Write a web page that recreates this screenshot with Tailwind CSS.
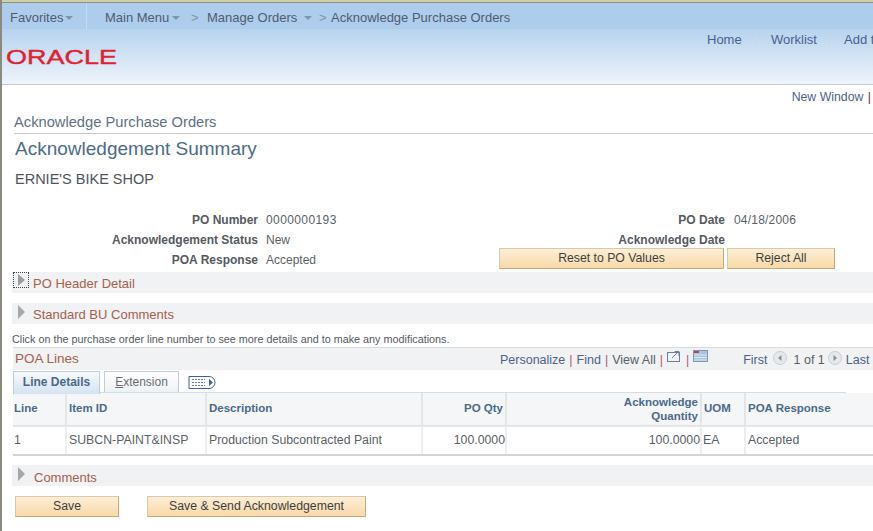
<!DOCTYPE html>
<html lang="en">
<head>
  <meta charset="UTF-8">
  <title>Acknowledge Purchase Orders</title>
  <script src="https://cdn.jsdelivr.net/npm/@tailwindcss/browser@4"></script>
</head>
<body class="bg-white">
  <div class="w-[873px] h-[531px] overflow-hidden font-['Liberation_Sans',Arial,sans-serif] text-[12px] text-[#5a5f66] border-l-2 border-[#8a8a80] relative">
    <!-- top edge -->
    <div class="h-[3px] -ml-[2px] bg-[#cfcfa8] border-b border-[#8f8f80]"></div>

    <!-- nav -->
    <div class="h-[26px] bg-[#aecdec] flex items-center text-[13px] text-[#4e5c70] whitespace-nowrap">
      <div class="w-[85px] h-full flex items-center pt-[4px] pl-[8px] gap-[2px] border-r border-[#c6daef]">
        <span>Favorites</span>
        <svg width="8" height="4" viewBox="0 0 8 4"><path d="M0 0h8L4 4z" fill="#7d95ad"/></svg>
      </div>
      <div class="flex items-center pt-[4px]">
        <span class="ml-[18px] w-[65px]">Main Menu</span>
        <svg class="ml-[2px]" width="8" height="4" viewBox="0 0 8 4"><path d="M0 0h8L4 4z" fill="#7d95ad"/></svg>
        <span class="ml-[11px] w-[11px] text-[#7f93a8]">&gt;</span>
        <span class="ml-[5px] w-[90px]">Manage Orders</span>
        <svg class="ml-[7px]" width="8" height="4" viewBox="0 0 8 4"><path d="M0 0h8L4 4z" fill="#7d95ad"/></svg>
        <span class="ml-[7px] w-[12px] text-[#7f93a8]">&gt;</span>
        <span>Acknowledge Purchase Orders</span>
      </div>
    </div>

    <!-- header -->
    <div class="h-[56px] bg-gradient-to-b from-[#b7d3ee] to-[#eef4fb] border-b border-[#c4c9ce] flex justify-between">
      <div class="pl-[4px] pt-[14px]">
        <svg width="114" height="28" viewBox="0 0 114 28">
          <text x="0" y="21" textLength="111" lengthAdjust="spacingAndGlyphs" font-family="Liberation Sans" font-size="20" stroke="#e0222e" stroke-width="0.4" fill="#e0222e">ORACLE</text>
        </svg>
      </div>
      <div class="flex h-[20px] mt-[1px] text-[13px] text-[#4a5f92] items-center whitespace-nowrap w-[166px] shrink-0">
        <span class="w-[50px] shrink-0 border-r border-[#c8d8e8] h-[14px] leading-[14px]">Home</span>
        <span class="ml-[14px] w-[59px] shrink-0 border-r border-[#c8d8e8] h-[14px] leading-[14px]">Worklist</span>
        <span class="ml-[14px] shrink-0">Add to</span>
      </div>
    </div>

    <!-- new window -->
    <div class="h-[21px] pt-[3px] flex justify-end items-center text-[12.300px] text-[#4f5f8a]">
      <span class="whitespace-nowrap">New Window <span class="text-[#7a1f4a] ml-[1px]">|</span></span>
      <span class="w-[2px]"></span>
    </div>

    <!-- page title -->
    <div class="mt-[3px] ml-[12px] h-[25px] border-b border-[#c9c9c9] text-[14.700px] leading-[26px] text-[#5d7186]">Acknowledge Purchase Orders</div>
    <div class="ml-[13px] h-[30px] text-[19px] leading-[30px] text-[#4c6b8c]">Acknowledgement Summary</div>
    <div class="ml-[13px] mt-[5px] h-[20px] text-[14.500px] leading-[20px] text-[#50555c]">ERNIE'S BIKE SHOP</div>

    <!-- summary fields -->
    <div class="mt-[21px] h-[62px] flex relative">
      <div class="w-[256px] flex flex-col text-right font-bold text-[#555a60] leading-[20px]">
        <span>PO Number</span>
        <span>Acknowledgement Status</span>
        <span>POA Response</span>
      </div>
      <div class="w-[467px] ml-[8px] flex flex-col leading-[20px]">
        <span class="tracking-[0.4px]">0000000193</span>
        <span>New</span>
        <span>Accepted</span>
      </div>
      <div class="flex flex-col leading-[20px] font-bold text-right text-[#555a60] absolute right-[148px] top-0 items-end">
        <span>PO Date</span>
        <span>Acknowledge Date</span>
      </div>
      <span class="absolute left-[732px] top-0 leading-[20px] tracking-[0.2px]">04/18/2006</span>
      <div class="absolute left-[497px] top-[38px] flex gap-[3px] text-[12.250px] text-[#3f3f3f]">
        <button class="w-[225px] h-[21px] bg-gradient-to-b from-[#fdeed7] to-[#f8d9a8] border border-[#d8c9ab] border-r-[#c9a878] border-b-[#c9a878]">Reset to PO Values</button>
        <button class="w-[108px] h-[21px] bg-gradient-to-b from-[#fdeed7] to-[#f8d9a8] border border-[#d8c9ab] border-r-[#c9a878] border-b-[#c9a878]">Reject All</button>
      </div>
    </div>

    <!-- collapsible sections -->
    <div class="ml-[10px] h-[21px] bg-[#f0f2f3] flex items-center text-[13px] text-[#a8604d]">
      <span class="w-[16px] h-[16px] ml-[1px] -mt-[5px] border border-dotted border-[#444] flex items-center justify-center">
        <svg width="9" height="12" viewBox="0 0 9 12"><path d="M1 0l7 6-7 6z" fill="#9a9c9e"/></svg>
      </span>
      <span class="ml-[4px] mt-[2px]">PO Header Detail</span>
    </div>
    <div class="mt-[10px] ml-[10px] h-[21px] bg-[#f0f2f3] flex items-center text-[13px] text-[#a8604d]">
      <svg class="ml-[5px] -mt-[4px]" width="9" height="14" viewBox="0 0 9 14"><path d="M1 0l7 7-7 7z" fill="#a5a7a9"/></svg>
      <span class="ml-[7px] mt-[3px]">Standard BU Comments</span>
    </div>

    <div class="ml-[10px] mt-[8px] h-[15px] text-[10.800px] leading-[14px] whitespace-nowrap text-[#55595e]">Click on the purchase order line number to see more details and to make any modifications.</div>

    <!-- POA lines -->
    <div class="ml-[11px] h-[23px] bg-[#f0f2f3] border-t border-[#d9dcde] flex items-center relative text-[12.500px] text-[#4f5f8a]">
      <span class="ml-[2px] text-[13.500px] text-[#a8604d]">POA Lines</span>
      <div class="absolute left-[487px] top-[3px] flex items-center whitespace-nowrap h-[18px]">
        <span>Personalize</span><span class="mx-[4px] text-[#b5566e]">|</span>
        <span>Find</span><span class="mx-[4px] text-[#b5566e]">|</span>
        <span class="text-[#5a5f66]">View All</span><span class="mx-[4px] text-[#b5566e]">|</span>
        <svg class="-mt-[8px]" width="15" height="12" viewBox="0 0 15 12" fill="none"><rect x="0.500" y="2.500" width="12" height="9" stroke="#6d7f9c"/><path d="M5 8l6-6M7.500 1.500h4.500V6" stroke="#6d7f9c"/></svg>
        <span class="mx-[4px] text-[#b5566e]">|</span>
        <svg class="-mt-[8px]" width="15" height="12" viewBox="0 0 15 12"><rect x="0.500" y="0.500" width="14" height="11" fill="#a9c5df" stroke="#7f97b3"/><rect x="1" y="1" width="5" height="2" fill="#b3475f"/><path d="M1 5h13M1 7.500h13M1 10h13" stroke="#dce8f2"/></svg>
        <span class="ml-[35px]">First</span>
        <svg class="ml-[5px] -mt-[4px]" width="14" height="14" viewBox="0 0 14 14"><circle cx="7" cy="7" r="6.500" fill="#e6e9ec" stroke="#c9cdd1"/><path d="M8.500 4v6L5 7z" fill="#8a8f95"/></svg>
        <span class="ml-[7px] text-[#5a5f66]">1 of 1</span>
        <svg class="ml-[3px] -mt-[4px]" width="14" height="14" viewBox="0 0 14 14"><circle cx="7" cy="7" r="6.500" fill="#e6e9ec" stroke="#c9cdd1"/><path d="M5.500 4v6L9 7z" fill="#8a8f95"/></svg>
        <span class="ml-[4px]">Last</span>
      </div>
    </div>

    <!-- tabs -->
    <div class="mt-[1px] ml-[11px] h-[21px] flex items-end w-[833px] border-b-2 border-[#d3dde6] box-content -mb-[1px]">
      <div class="w-[87px] h-[23px] pb-[2px] -mb-[2px] bg-gradient-to-b from-[#f7fafd] to-[#d5e3f1] border border-b-0 border-[#c2ccd6] flex items-center justify-center font-bold text-[#4a6a8c]">Line Details</div>
      <div class="ml-[4px] w-[75px] h-[21px] bg-gradient-to-b from-[#ffffff] to-[#eef1f4] border border-b-0 border-[#c2ccd6] flex items-center justify-center text-[#6b6f75]"><span><span class="underline">E</span>xtension</span></div>
      <svg class="ml-[9px] mb-[2px]" width="28" height="15" viewBox="0 0 28 15"><path d="M1 1.500h20a6 6 0 0 1 0 12h-20z" fill="#fff" stroke="#3f5f9f"/><path d="M4 4.500h13M4 7.500h13M4 10.500h13" stroke="#5f7fb5" stroke-dasharray="2 1"/><path d="M21 4v7l4-3.500z" fill="#3f5f9f"/></svg>
    </div>

    <!-- table -->
    <div class="ml-[11px] w-[860px] text-[11.500px]">
      <div class="grid grid-cols-[54px_140px_216px_84px_195px_44px_127px] h-[34px] font-bold text-[#4a6a8c] bg-[#f5f6f7] border-b-2 border-[#e3e5e7]">
        <div class="px-[1px] flex items-center border-r-2 border-[#e3e5e7]">Line</div>
        <div class="px-[2px] flex items-center border-r-2 border-[#e3e5e7]">Item ID</div>
        <div class="px-[2px] flex items-center border-r-2 border-[#e3e5e7]">Description</div>
        <div class="px-[2px] flex items-center justify-end border-r-2 border-[#e3e5e7]">PO Qty</div>
        <div class="px-[2px] flex items-center justify-end text-right leading-[14px] border-r-2 border-[#e3e5e7]">Acknowledge<br>Quantity</div>
        <div class="px-[2px] flex items-center border-r-2 border-[#e3e5e7]">UOM</div>
        <div class="px-[2px] flex items-center">POA Response</div>
      </div>
      <div class="grid grid-cols-[54px_140px_216px_84px_195px_44px_127px] h-[29px] text-[12.300px] border-b-2 border-[#d3d6d9]">
        <div class="px-[1px] flex items-center border-r-2 border-[#eceef0]">1</div>
        <div class="px-[2px] flex items-center border-r-2 border-[#eceef0]">SUBCN-PAINT&amp;INSP</div>
        <div class="px-[2px] flex items-center border-r-2 border-[#eceef0]">Production Subcontracted Paint</div>
        <div class="flex items-center justify-end border-r-2 border-[#eceef0]">100.0000</div>
        <div class="flex items-center justify-end border-r-2 border-[#eceef0]">100.0000</div>
        <div class="px-[1px] flex items-center border-r-2 border-[#eceef0]">EA</div>
        <div class="px-[2px] flex items-center">Accepted</div>
      </div>
    </div>

    <!-- comments -->
    <div class="mt-[9px] ml-[10px] h-[21px] bg-[#f0f2f3] flex items-center text-[13px] text-[#a8604d]">
      <svg class="ml-[5px] -mt-[4px]" width="9" height="14" viewBox="0 0 9 14"><path d="M1 0l7 7-7 7z" fill="#a5a7a9"/></svg>
      <span class="ml-[8px] mt-[4px]">Comments</span>
    </div>

    <!-- bottom buttons -->
    <div class="mt-[10px] ml-[13px] flex gap-[28px] text-[12.300px] text-[#3f3f3f]">
      <button class="w-[104px] h-[21px] bg-gradient-to-b from-[#fdeed7] to-[#f8d9a8] border border-[#d8c9ab] border-r-[#c9a878] border-b-[#c9a878]">Save</button>
      <button class="w-[219px] h-[21px] bg-gradient-to-b from-[#fdeed7] to-[#f8d9a8] border border-[#d8c9ab] border-r-[#c9a878] border-b-[#c9a878]">Save &amp; Send Acknowledgement</button>
    </div>
  </div>
</body>
</html>
